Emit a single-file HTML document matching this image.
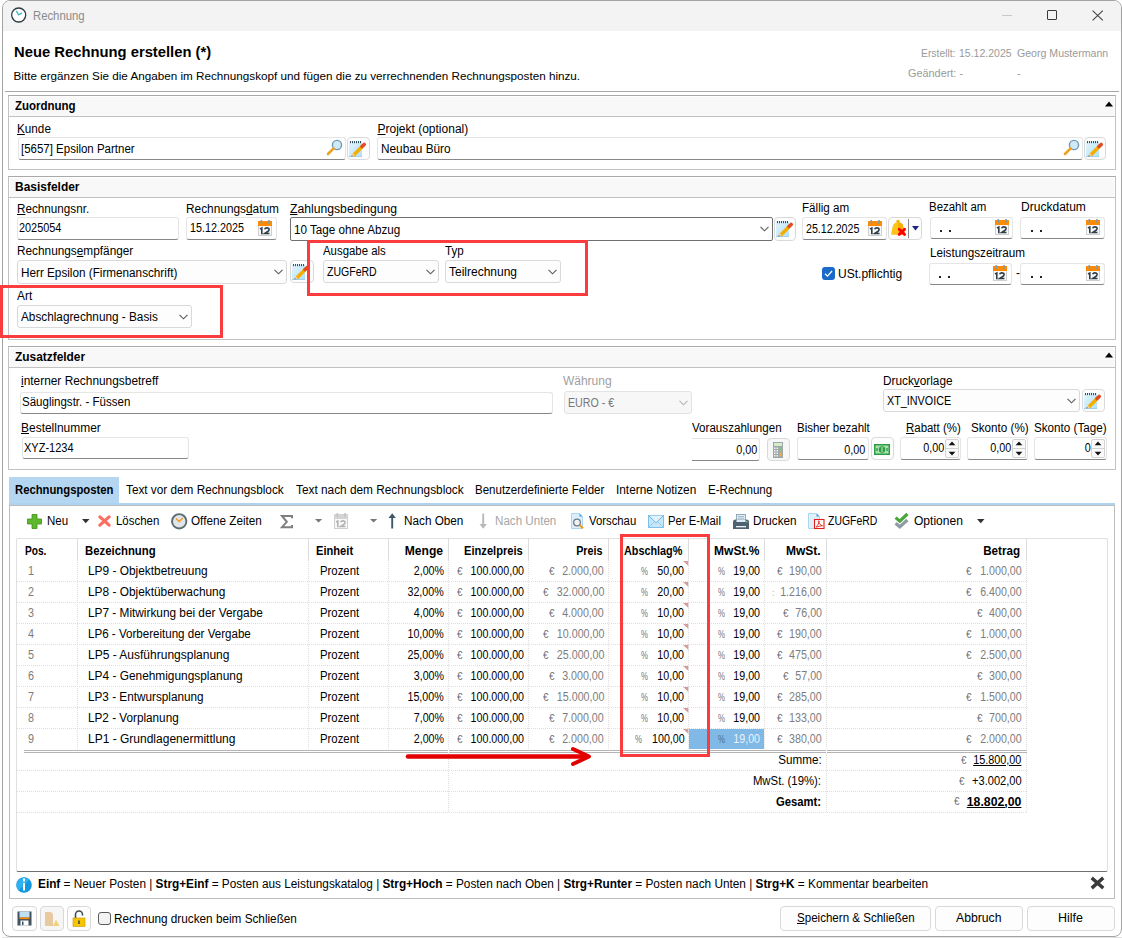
<!DOCTYPE html>
<html><head><meta charset="utf-8"><title>Rechnung</title>
<style>
html,body{margin:0;padding:0;}
body{width:1122px;height:938px;overflow:hidden;position:relative;background:#fff;font-family:"Liberation Sans",sans-serif;}
.t{position:absolute;line-height:1;white-space:pre;}
.b{position:absolute;box-sizing:border-box;}
svg{position:absolute;overflow:visible;}
u{text-decoration:underline;text-underline-offset:0.5px;text-decoration-thickness:1px;}
</style></head><body>
<div class="b" style="left:2px;top:0px;width:1120px;height:937px;border:1px solid #a3a3a3;border-radius:8px;background:#fff;"></div>
<div class="b" style="left:3px;top:1px;width:1118px;height:30px;background:#f3f3f3;border-radius:7px 7px 0 0;"></div>
<div class="b" style="left:2px;top:937px;width:1120px;height:1px;background:#e2e2e2;"></div>
<svg style="left:11px;top:7px" width="16" height="16" viewBox="0 0 16 16">
<circle cx="7.7" cy="8" r="7" fill="#fff" stroke="#2a3b42" stroke-width="1.3"/>
<path d="M5.3 3.8 L7.6 7.8 L11 6" fill="none" stroke="#4cb9c3" stroke-width="1.5"/>
</svg>
<div class="t" id="t0" style="left:32.5px;top:9.84px;font-size:12px;font-weight:400;color:#8b8b8b;transform:scaleX(0.9430);transform-origin:left 0;">Rechnung</div>
<div class="b" style="left:1002px;top:15px;width:10px;height:1px;background:#c9c9c9;"></div>
<div class="b" style="left:1047px;top:10px;width:10px;height:10px;border:1px solid #3a3a3a;border-radius:1px;"></div>
<svg style="left:1092px;top:10px" width="12" height="11"><path d="M0.6 0.6 L10.8 10.4 M10.8 0.6 L0.6 10.4" stroke="#444" stroke-width="1.1"/></svg>
<div class="t" id="t1" style="left:13.5px;top:44.10px;font-size:15px;font-weight:700;color:#000;transform:scaleX(0.9858);transform-origin:left 0;">Neue Rechnung erstellen (*)</div>
<div class="t" id="t2" style="left:13.5px;top:70.10px;font-size:11.7px;font-weight:400;color:#000;">Bitte ergänzen Sie die Angaben im Rechnungskopf und fügen die zu verrechnenden Rechnungsposten hinzu.</div>
<div class="t" id="t3" style="left:921.0px;top:47.89px;font-size:11px;font-weight:400;color:#9a9a9a;transform:scaleX(0.9404);transform-origin:left 0;">Erstellt:</div>
<div class="t" id="t4" style="left:959.4px;top:47.89px;font-size:11px;font-weight:400;color:#9a9a9a;transform:scaleX(0.9553);transform-origin:left 0;">15.12.2025</div>
<div class="t" id="t5" style="left:1017.0px;top:47.89px;font-size:11px;font-weight:400;color:#9a9a9a;transform:scaleX(0.9624);transform-origin:left 0;">Georg Mustermann</div>
<div class="t" id="t6" style="left:908.0px;top:67.69px;font-size:11px;font-weight:400;color:#9a9a9a;transform:scaleX(0.9885);transform-origin:left 0;">Geändert: -</div>
<div class="t" id="t7" style="left:1017.4px;top:67.69px;font-size:11px;font-weight:400;color:#9a9a9a;transform:scaleX(0.9850);transform-origin:left 0;">-</div>
<div class="b" style="left:5px;top:91px;width:1114px;height:1px;background:#a8a8a8;"></div>
<div class="b" style="left:8px;top:95px;width:1108px;height:75px;border:1px solid #c2c2c2;border-top-color:#a9a9a9;background:#fff;"></div>
<div class="b" style="left:10px;top:97px;width:1104px;height:19px;background:#f8f8f8;"></div>
<div class="b" style="left:9px;top:116px;width:1106px;height:1px;background:#c2c2c2;"></div>
<div class="t" id="t8" style="left:15.2px;top:100.14px;font-size:12px;font-weight:700;color:#000;transform:scaleX(0.9572);transform-origin:left 0;">Zuordnung</div>
<svg style="left:1105px;top:101px" width="8" height="6"><path d="M0 5.5 L4 0.5 L8 5.5 Z" fill="#000"/></svg>
<div class="t" id="t9" style="left:17.3px;top:122.84px;font-size:12px;font-weight:400;color:#000;transform:scaleX(0.9764);transform-origin:left 0;"><u>K</u>unde</div>
<div class="b" style="left:18px;top:137px;width:328px;height:23px;border:1px solid #e5e5e5;border-bottom:1px solid #878787;border-radius:3px;background:#fff;"></div>
<div class="t" id="t10" style="left:21.4px;top:142.84px;font-size:12px;font-weight:400;color:#000;transform:scaleX(0.9566);transform-origin:left 0;">[5657] Epsilon Partner</div>
<svg style="left:325.5px;top:138.5px" width="17" height="17" viewBox="0 0 17 17">
<circle cx="11" cy="6" r="4.6" fill="#cfe9f7" stroke="#6e9bb5" stroke-width="1.4"/>
<path d="M7.6 9.4 L2 15" stroke="#f0a020" stroke-width="2.6" stroke-linecap="round"/>
</svg>
<div class="b" style="left:347px;top:137px;width:23px;height:23px;border:1px solid #d9d9d9;border-radius:4px;background:#fdfdfd;"></div>
<svg style="left:347px;top:137px" width="22" height="23" viewBox="0 0 22 23">
<defs><linearGradient id="npg" x1="0" y1="0" x2="1" y2="1"><stop offset="0" stop-color="#e6f5fd"/><stop offset="1" stop-color="#aee0f8"/></linearGradient></defs>
<rect x="2" y="4.5" width="13" height="15.5" fill="url(#npg)"/>
<path d="M2 19.5 H15" stroke="#9fd0ee" stroke-width="1"/>
<path d="M3.5 4v2.2M5.5 4v2.2M7.5 4v2.2M9.5 4v2.2M11.5 4v2.2M13.5 4v2.2" stroke="#34505f" stroke-width="1"/>
<path d="M6.2 18.4 L15.2 9.4" stroke="#f5ae00" stroke-width="3.6"/>
<path d="M15 9.6 L17.2 7.4" stroke="#e34a1c" stroke-width="3.6" stroke-linecap="round"/>
<path d="M4.3 19.6 L5.6 16 L7.8 18.2 Z" fill="#f8d9a8"/>
<path d="M4.3 19.6 L4.9 18 L5.9 19 Z" fill="#444"/>
</svg>
<div class="t" id="t11" style="left:377.5px;top:122.84px;font-size:12px;font-weight:400;color:#000;"><u>P</u>rojekt (optional)</div>
<div class="b" style="left:377px;top:137px;width:706px;height:23px;border:1px solid #e5e5e5;border-bottom:1px solid #878787;border-radius:3px;background:#fff;"></div>
<div class="t" id="t12" style="left:381.0px;top:142.84px;font-size:12px;font-weight:400;color:#000;transform:scaleX(0.9842);transform-origin:left 0;">Neubau Büro</div>
<svg style="left:1062.5px;top:138.5px" width="17" height="17" viewBox="0 0 17 17">
<circle cx="11" cy="6" r="4.6" fill="#cfe9f7" stroke="#6e9bb5" stroke-width="1.4"/>
<path d="M7.6 9.4 L2 15" stroke="#f0a020" stroke-width="2.6" stroke-linecap="round"/>
</svg>
<div class="b" style="left:1084px;top:137px;width:22px;height:23px;border:1px solid #d9d9d9;border-radius:4px;background:#fdfdfd;"></div>
<svg style="left:1084px;top:137px" width="22" height="23" viewBox="0 0 22 23">
<defs><linearGradient id="npg" x1="0" y1="0" x2="1" y2="1"><stop offset="0" stop-color="#e6f5fd"/><stop offset="1" stop-color="#aee0f8"/></linearGradient></defs>
<rect x="2" y="4.5" width="13" height="15.5" fill="url(#npg)"/>
<path d="M2 19.5 H15" stroke="#9fd0ee" stroke-width="1"/>
<path d="M3.5 4v2.2M5.5 4v2.2M7.5 4v2.2M9.5 4v2.2M11.5 4v2.2M13.5 4v2.2" stroke="#34505f" stroke-width="1"/>
<path d="M6.2 18.4 L15.2 9.4" stroke="#f5ae00" stroke-width="3.6"/>
<path d="M15 9.6 L17.2 7.4" stroke="#e34a1c" stroke-width="3.6" stroke-linecap="round"/>
<path d="M4.3 19.6 L5.6 16 L7.8 18.2 Z" fill="#f8d9a8"/>
<path d="M4.3 19.6 L4.9 18 L5.9 19 Z" fill="#444"/>
</svg>
<div class="b" style="left:8px;top:176px;width:1108px;height:164px;border:1px solid #c2c2c2;border-top-color:#a9a9a9;background:#fff;"></div>
<div class="b" style="left:10px;top:178px;width:1104px;height:19px;background:#f8f8f8;"></div>
<div class="b" style="left:9px;top:197px;width:1106px;height:1px;background:#c2c2c2;"></div>
<div class="t" id="t13" style="left:15.2px;top:181.14px;font-size:12px;font-weight:700;color:#000;transform:scaleX(0.9969);transform-origin:left 0;">Basisfelder</div>
<div class="t" id="t14" style="left:17.4px;top:203.14px;font-size:12px;font-weight:400;color:#000;transform:scaleX(0.9749);transform-origin:left 0;"><u>R</u>echnungsnr.</div>
<div class="b" style="left:17px;top:217px;width:162px;height:23px;border:1px solid #e5e5e5;border-bottom:1px solid #878787;border-radius:3px;background:#fff;"></div>
<div class="t" id="t15" style="left:18.7px;top:221.84px;font-size:12px;font-weight:400;color:#000;transform:scaleX(0.9054);transform-origin:left 0;">2025054</div>
<div class="t" id="t16" style="left:186.4px;top:203.14px;font-size:12px;font-weight:400;color:#000;transform:scaleX(0.9884);transform-origin:left 0;">Rechnungs<u>d</u>atum</div>
<div class="b" style="left:186px;top:217px;width:91px;height:23px;border:1px solid #e5e5e5;border-bottom:1px solid #878787;border-radius:3px;background:#fff;"></div>
<div class="t" id="t17" style="left:190.0px;top:221.84px;font-size:12px;font-weight:400;color:#000;transform:scaleX(0.8974);transform-origin:left 0;">15.12.2025</div>
<svg style="left:258px;top:220px" width="14" height="16" viewBox="0 0 14 16">
<rect x="0.5" y="5.5" width="13" height="10" fill="#f8f8f8" stroke="#cfcfcf" stroke-width="1"/>
<rect x="0" y="1" width="14" height="5" fill="#ff8a00"/>
<rect x="2.5" y="0" width="1.6" height="4" fill="#7f9db0"/>
<rect x="10.2" y="0" width="1.6" height="4" fill="#7f9db0"/>
<path d="M2 9 L3.8 8 V14.2" fill="none" stroke="#2f3f49" stroke-width="1.6"/>
<path d="M6.6 9.3 Q7.2 7.9 8.9 7.9 Q11.2 7.9 11.1 9.6 Q11 10.9 8.6 12.3 L6.8 13.5 H11.5" fill="none" stroke="#2f3f49" stroke-width="1.6"/>
</svg>
<div class="t" id="t18" style="left:290.0px;top:203.14px;font-size:12px;font-weight:400;color:#000;transform:scaleX(1.0148);transform-origin:left 0;"><u>Z</u>ahlungsbedingung</div>
<div class="b" style="left:290px;top:217px;width:483px;height:24px;border:1px solid #707070;border-radius:2px;background:#fff;"></div>
<div class="t" id="t19" style="left:294.3px;top:223.64px;font-size:12px;font-weight:400;color:#000;transform:scaleX(0.9733);transform-origin:left 0;">10 Tage ohne Abzug</div>
<svg style="left:759.5px;top:226px" width="9" height="6"><path d="M0.5 0.8 L4.5 4.8 L8.5 0.8" fill="none" stroke="#5a5a5a" stroke-width="1.1"/></svg>
<div class="b" style="left:774px;top:217px;width:22px;height:24px;border:1px solid #d9d9d9;border-radius:4px;background:#fdfdfd;"></div>
<svg style="left:774px;top:217px" width="22" height="23" viewBox="0 0 22 23">
<defs><linearGradient id="npg" x1="0" y1="0" x2="1" y2="1"><stop offset="0" stop-color="#e6f5fd"/><stop offset="1" stop-color="#aee0f8"/></linearGradient></defs>
<rect x="2" y="4.5" width="13" height="15.5" fill="url(#npg)"/>
<path d="M2 19.5 H15" stroke="#9fd0ee" stroke-width="1"/>
<path d="M3.5 4v2.2M5.5 4v2.2M7.5 4v2.2M9.5 4v2.2M11.5 4v2.2M13.5 4v2.2" stroke="#34505f" stroke-width="1"/>
<path d="M6.2 18.4 L15.2 9.4" stroke="#f5ae00" stroke-width="3.6"/>
<path d="M15 9.6 L17.2 7.4" stroke="#e34a1c" stroke-width="3.6" stroke-linecap="round"/>
<path d="M4.3 19.6 L5.6 16 L7.8 18.2 Z" fill="#f8d9a8"/>
<path d="M4.3 19.6 L4.9 18 L5.9 19 Z" fill="#444"/>
</svg>
<div class="t" id="t20" style="left:802.4px;top:201.84px;font-size:12px;font-weight:400;color:#000;transform:scaleX(0.9694);transform-origin:left 0;">Fällig am</div>
<div class="b" style="left:802px;top:217px;width:85px;height:23px;border:1px solid #e5e5e5;border-bottom:1px solid #878787;border-radius:3px;background:#fff;"></div>
<div class="t" id="t21" style="left:806.0px;top:222.64px;font-size:12px;font-weight:400;color:#000;transform:scaleX(0.8891);transform-origin:left 0;">25.12.2025</div>
<svg style="left:868px;top:220px" width="14" height="16" viewBox="0 0 14 16">
<rect x="0.5" y="5.5" width="13" height="10" fill="#f8f8f8" stroke="#cfcfcf" stroke-width="1"/>
<rect x="0" y="1" width="14" height="5" fill="#ff8a00"/>
<rect x="2.5" y="0" width="1.6" height="4" fill="#7f9db0"/>
<rect x="10.2" y="0" width="1.6" height="4" fill="#7f9db0"/>
<path d="M2 9 L3.8 8 V14.2" fill="none" stroke="#2f3f49" stroke-width="1.6"/>
<path d="M6.6 9.3 Q7.2 7.9 8.9 7.9 Q11.2 7.9 11.1 9.6 Q11 10.9 8.6 12.3 L6.8 13.5 H11.5" fill="none" stroke="#2f3f49" stroke-width="1.6"/>
</svg>
<div class="b" style="left:888px;top:217px;width:34px;height:23px;border:1px solid #d9d9d9;border-radius:4px;background:#fdfdfd;"></div>
<div class="b" style="left:908px;top:219px;width:1px;height:19px;background:#888;"></div>
<svg style="left:889px;top:219px" width="18" height="18" viewBox="0 0 18 18">
<circle cx="9" cy="2.4" r="1.7" fill="#f2b400"/>
<path d="M2 15.8 L2.6 12.5 C3.4 9 3.6 5.5 5.6 4.2 C7 3.2 11 3.2 12.4 4.2 C14.4 5.5 14.6 9 15.4 12.5 L16 15.8 Z" fill="#fcc419"/>
<path d="M9 3.2 C11 3.2 12.4 4.2 12.4 4.2 C14.4 5.5 14.6 9 15.4 12.5 L16 15.8 H9 Z" fill="#f5b000"/>
<path d="M10.2 10.2 L15.6 15.6 M15.6 10.2 L10.2 15.6" stroke="#ff0000" stroke-width="2.8" stroke-linecap="round"/>
</svg>
<svg style="left:912px;top:225.5px" width="7" height="5"><path d="M0 0 L7 0 L3.5 4.5 Z" fill="#1a237e"/></svg>
<div class="t" id="t22" style="left:929.4px;top:201.44px;font-size:12px;font-weight:400;color:#000;transform:scaleX(0.9545);transform-origin:left 0;">Bezahlt am</div>
<div class="b" style="left:930px;top:217px;width:83px;height:22px;border:1px solid #e5e5e5;border-bottom:1px solid #878787;border-radius:3px;background:#fff;"></div>
<div class="b" style="left:940px;top:230px;width:2px;height:2px;background:#222;"></div>
<div class="b" style="left:949px;top:230px;width:2px;height:2px;background:#222;"></div>
<svg style="left:995px;top:219px" width="14" height="16" viewBox="0 0 14 16">
<rect x="0.5" y="5.5" width="13" height="10" fill="#f8f8f8" stroke="#cfcfcf" stroke-width="1"/>
<rect x="0" y="1" width="14" height="5" fill="#ff8a00"/>
<rect x="2.5" y="0" width="1.6" height="4" fill="#7f9db0"/>
<rect x="10.2" y="0" width="1.6" height="4" fill="#7f9db0"/>
<path d="M2 9 L3.8 8 V14.2" fill="none" stroke="#2f3f49" stroke-width="1.6"/>
<path d="M6.6 9.3 Q7.2 7.9 8.9 7.9 Q11.2 7.9 11.1 9.6 Q11 10.9 8.6 12.3 L6.8 13.5 H11.5" fill="none" stroke="#2f3f49" stroke-width="1.6"/>
</svg>
<div class="t" id="t23" style="left:1020.5px;top:201.44px;font-size:12px;font-weight:400;color:#000;transform:scaleX(1.0033);transform-origin:left 0;">Druckdatum</div>
<div class="b" style="left:1020px;top:217px;width:85px;height:22px;border:1px solid #e5e5e5;border-bottom:1px solid #878787;border-radius:3px;background:#fff;"></div>
<div class="b" style="left:1031px;top:230px;width:2px;height:2px;background:#222;"></div>
<div class="b" style="left:1040px;top:230px;width:2px;height:2px;background:#222;"></div>
<svg style="left:1086px;top:219px" width="14" height="16" viewBox="0 0 14 16">
<rect x="0.5" y="5.5" width="13" height="10" fill="#f8f8f8" stroke="#cfcfcf" stroke-width="1"/>
<rect x="0" y="1" width="14" height="5" fill="#ff8a00"/>
<rect x="2.5" y="0" width="1.6" height="4" fill="#7f9db0"/>
<rect x="10.2" y="0" width="1.6" height="4" fill="#7f9db0"/>
<path d="M2 9 L3.8 8 V14.2" fill="none" stroke="#2f3f49" stroke-width="1.6"/>
<path d="M6.6 9.3 Q7.2 7.9 8.9 7.9 Q11.2 7.9 11.1 9.6 Q11 10.9 8.6 12.3 L6.8 13.5 H11.5" fill="none" stroke="#2f3f49" stroke-width="1.6"/>
</svg>
<div class="t" id="t24" style="left:17.4px;top:244.84px;font-size:12px;font-weight:400;color:#000;transform:scaleX(0.9847);transform-origin:left 0;">Rechnungs<u>e</u>mpfänger</div>
<div class="b" style="left:17px;top:260px;width:270px;height:24px;border:1px solid #d9d9d9;border-radius:3px;background:#fdfdfd;"></div>
<svg style="left:274.0px;top:269.0px" width="9" height="6"><path d="M0.5 0.8 L4.5 4.8 L8.5 0.8" fill="none" stroke="#5a5a5a" stroke-width="1.1"/></svg>
<div class="t" id="t25" style="left:21.0px;top:266.84px;font-size:12px;font-weight:400;color:#000;transform:scaleX(0.9766);transform-origin:left 0;">Herr Epsilon (Firmenanschrift)</div>
<div class="b" style="left:290px;top:260px;width:24px;height:23px;border:1px solid #d9d9d9;border-radius:4px;background:#fdfdfd;"></div>
<svg style="left:290px;top:260px" width="22" height="23" viewBox="0 0 22 23">
<defs><linearGradient id="npg" x1="0" y1="0" x2="1" y2="1"><stop offset="0" stop-color="#e6f5fd"/><stop offset="1" stop-color="#aee0f8"/></linearGradient></defs>
<rect x="2" y="4.5" width="13" height="15.5" fill="url(#npg)"/>
<path d="M2 19.5 H15" stroke="#9fd0ee" stroke-width="1"/>
<path d="M3.5 4v2.2M5.5 4v2.2M7.5 4v2.2M9.5 4v2.2M11.5 4v2.2M13.5 4v2.2" stroke="#34505f" stroke-width="1"/>
<path d="M6.2 18.4 L15.2 9.4" stroke="#f5ae00" stroke-width="3.6"/>
<path d="M15 9.6 L17.2 7.4" stroke="#e34a1c" stroke-width="3.6" stroke-linecap="round"/>
<path d="M4.3 19.6 L5.6 16 L7.8 18.2 Z" fill="#f8d9a8"/>
<path d="M4.3 19.6 L4.9 18 L5.9 19 Z" fill="#444"/>
</svg>
<div class="b" style="left:307px;top:240px;width:281px;height:56px;border:3px solid #fb3c3f;"></div>
<div class="t" id="t26" style="left:323.4px;top:244.84px;font-size:12px;font-weight:400;color:#000;transform:scaleX(0.9493);transform-origin:left 0;">Ausgabe als</div>
<div class="b" style="left:323px;top:260px;width:116px;height:23px;border:1px solid #d9d9d9;border-radius:3px;background:#fdfdfd;"></div>
<svg style="left:426.0px;top:268.5px" width="9" height="6"><path d="M0.5 0.8 L4.5 4.8 L8.5 0.8" fill="none" stroke="#5a5a5a" stroke-width="1.1"/></svg>
<div class="t" id="t27" style="left:327.1px;top:266.14px;font-size:12px;font-weight:400;color:#000;transform:scaleX(0.8770);transform-origin:left 0;">ZUGFeRD</div>
<div class="t" id="t28" style="left:445.4px;top:244.84px;font-size:12px;font-weight:400;color:#000;transform:scaleX(0.9616);transform-origin:left 0;">Typ</div>
<div class="b" style="left:445px;top:260px;width:116px;height:23px;border:1px solid #d9d9d9;border-radius:3px;background:#fdfdfd;"></div>
<svg style="left:548.0px;top:268.5px" width="9" height="6"><path d="M0.5 0.8 L4.5 4.8 L8.5 0.8" fill="none" stroke="#5a5a5a" stroke-width="1.1"/></svg>
<div class="t" id="t29" style="left:449.0px;top:266.14px;font-size:12px;font-weight:400;color:#000;">Teilrechnung</div>
<div class="b" style="left:822px;top:267px;width:13px;height:13px;background:#1b6ac9;border-radius:3px;"></div>
<svg style="left:824px;top:269px" width="9" height="9"><path d="M1 4.8 L3.5 7.2 L8 2" fill="none" stroke="#fff" stroke-width="1.2"/></svg>
<div class="t" id="t30" style="left:838.4px;top:267.74px;font-size:12px;font-weight:400;color:#000;transform:scaleX(1.0026);transform-origin:left 0;">USt.pflichtig</div>
<div class="t" id="t31" style="left:929.5px;top:247.04px;font-size:12px;font-weight:400;color:#000;transform:scaleX(0.9755);transform-origin:left 0;">Leistungszeitraum</div>
<div class="b" style="left:929px;top:263px;width:83px;height:22px;border:1px solid #e5e5e5;border-bottom:1px solid #878787;border-radius:3px;background:#fff;"></div>
<div class="b" style="left:939px;top:276px;width:2px;height:2px;background:#222;"></div>
<div class="b" style="left:948px;top:276px;width:2px;height:2px;background:#222;"></div>
<svg style="left:993px;top:265px" width="14" height="16" viewBox="0 0 14 16">
<rect x="0.5" y="5.5" width="13" height="10" fill="#f8f8f8" stroke="#cfcfcf" stroke-width="1"/>
<rect x="0" y="1" width="14" height="5" fill="#ff8a00"/>
<rect x="2.5" y="0" width="1.6" height="4" fill="#7f9db0"/>
<rect x="10.2" y="0" width="1.6" height="4" fill="#7f9db0"/>
<path d="M2 9 L3.8 8 V14.2" fill="none" stroke="#2f3f49" stroke-width="1.6"/>
<path d="M6.6 9.3 Q7.2 7.9 8.9 7.9 Q11.2 7.9 11.1 9.6 Q11 10.9 8.6 12.3 L6.8 13.5 H11.5" fill="none" stroke="#2f3f49" stroke-width="1.6"/>
</svg>
<div class="t" id="t32" style="left:1015.5px;top:266.84px;font-size:12px;font-weight:400;color:#000;transform:scaleX(0.9850);transform-origin:left 0;">-</div>
<div class="b" style="left:1020px;top:263px;width:85px;height:22px;border:1px solid #e5e5e5;border-bottom:1px solid #878787;border-radius:3px;background:#fff;"></div>
<div class="b" style="left:1031px;top:276px;width:2px;height:2px;background:#222;"></div>
<div class="b" style="left:1040px;top:276px;width:2px;height:2px;background:#222;"></div>
<svg style="left:1086px;top:265px" width="14" height="16" viewBox="0 0 14 16">
<rect x="0.5" y="5.5" width="13" height="10" fill="#f8f8f8" stroke="#cfcfcf" stroke-width="1"/>
<rect x="0" y="1" width="14" height="5" fill="#ff8a00"/>
<rect x="2.5" y="0" width="1.6" height="4" fill="#7f9db0"/>
<rect x="10.2" y="0" width="1.6" height="4" fill="#7f9db0"/>
<path d="M2 9 L3.8 8 V14.2" fill="none" stroke="#2f3f49" stroke-width="1.6"/>
<path d="M6.6 9.3 Q7.2 7.9 8.9 7.9 Q11.2 7.9 11.1 9.6 Q11 10.9 8.6 12.3 L6.8 13.5 H11.5" fill="none" stroke="#2f3f49" stroke-width="1.6"/>
</svg>
<div class="b" style="left:0px;top:285px;width:223px;height:53px;border:3px solid #fb3c3f;"></div>
<div class="t" id="t33" style="left:17.4px;top:289.84px;font-size:12px;font-weight:400;color:#000;transform:scaleX(0.9906);transform-origin:left 0;">Art</div>
<div class="b" style="left:17px;top:305px;width:175px;height:23px;border:1px solid #d9d9d9;border-radius:3px;background:#fdfdfd;"></div>
<svg style="left:179.0px;top:313.5px" width="9" height="6"><path d="M0.5 0.8 L4.5 4.8 L8.5 0.8" fill="none" stroke="#5a5a5a" stroke-width="1.1"/></svg>
<div class="t" id="t34" style="left:21.0px;top:310.84px;font-size:12px;font-weight:400;color:#000;transform:scaleX(0.9812);transform-origin:left 0;">Abschlagrechnung - Basis</div>
<div class="b" style="left:8px;top:346px;width:1108px;height:124px;border:1px solid #c2c2c2;border-top-color:#a9a9a9;background:#fff;"></div>
<div class="b" style="left:10px;top:348px;width:1104px;height:19px;background:#f8f8f8;"></div>
<div class="b" style="left:9px;top:367px;width:1106px;height:1px;background:#c2c2c2;"></div>
<div class="t" id="t35" style="left:15.2px;top:351.14px;font-size:12px;font-weight:700;color:#000;transform:scaleX(0.9917);transform-origin:left 0;">Zusatzfelder</div>
<svg style="left:1105px;top:352px" width="8" height="6"><path d="M0 5.5 L4 0.5 L8 5.5 Z" fill="#000"/></svg>
<div class="t" id="t36" style="left:21.2px;top:374.84px;font-size:12px;font-weight:400;color:#000;transform:scaleX(0.9910);transform-origin:left 0;"><u>i</u>nterner Rechnungsbetreff</div>
<div class="b" style="left:20px;top:392px;width:533px;height:22px;border:1px solid #e5e5e5;border-bottom:1px solid #878787;border-radius:3px;background:#fff;"></div>
<div class="t" id="t37" style="left:22.0px;top:395.84px;font-size:12px;font-weight:400;color:#000;transform:scaleX(0.9607);transform-origin:left 0;">Säuglingstr. - Füssen</div>
<div class="t" id="t38" style="left:563.2px;top:375.24px;font-size:12px;font-weight:400;color:#a0a0a0;transform:scaleX(0.9979);transform-origin:left 0;">Währung</div>
<div class="b" style="left:564px;top:391px;width:128px;height:23px;border:1px solid #d9d9d9;border-radius:3px;background:#fdfdfd;background:#f7f7f7;border-color:#e3e3e3;"></div>
<svg style="left:679.0px;top:399.5px" width="9" height="6"><path d="M0.5 0.8 L4.5 4.8 L8.5 0.8" fill="none" stroke="#b5b5b5" stroke-width="1.1"/></svg>
<div class="t" id="t39" style="left:568.3px;top:396.84px;font-size:12px;font-weight:400;color:#777;transform:scaleX(0.8901);transform-origin:left 0;">EURO - €</div>
<div class="t" id="t40" style="left:882.6px;top:374.84px;font-size:12px;font-weight:400;color:#000;transform:scaleX(0.9830);transform-origin:left 0;">Druck<u>v</u>orlage</div>
<div class="b" style="left:883px;top:389px;width:197px;height:23px;border:1px solid #d9d9d9;border-radius:3px;background:#fdfdfd;"></div>
<svg style="left:1067.0px;top:397.5px" width="9" height="6"><path d="M0.5 0.8 L4.5 4.8 L8.5 0.8" fill="none" stroke="#5a5a5a" stroke-width="1.1"/></svg>
<div class="t" id="t41" style="left:887.0px;top:394.84px;font-size:12px;font-weight:400;color:#000;transform:scaleX(0.8997);transform-origin:left 0;">XT_INVOICE</div>
<div class="b" style="left:1082px;top:389px;width:23px;height:23px;border:1px solid #d9d9d9;border-radius:4px;background:#fdfdfd;"></div>
<svg style="left:1082px;top:389px" width="22" height="23" viewBox="0 0 22 23">
<defs><linearGradient id="npg" x1="0" y1="0" x2="1" y2="1"><stop offset="0" stop-color="#e6f5fd"/><stop offset="1" stop-color="#aee0f8"/></linearGradient></defs>
<rect x="2" y="4.5" width="13" height="15.5" fill="url(#npg)"/>
<path d="M2 19.5 H15" stroke="#9fd0ee" stroke-width="1"/>
<path d="M3.5 4v2.2M5.5 4v2.2M7.5 4v2.2M9.5 4v2.2M11.5 4v2.2M13.5 4v2.2" stroke="#34505f" stroke-width="1"/>
<path d="M6.2 18.4 L15.2 9.4" stroke="#f5ae00" stroke-width="3.6"/>
<path d="M15 9.6 L17.2 7.4" stroke="#e34a1c" stroke-width="3.6" stroke-linecap="round"/>
<path d="M4.3 19.6 L5.6 16 L7.8 18.2 Z" fill="#f8d9a8"/>
<path d="M4.3 19.6 L4.9 18 L5.9 19 Z" fill="#444"/>
</svg>
<div class="t" id="t42" style="left:21.2px;top:421.84px;font-size:12px;font-weight:400;color:#000;transform:scaleX(0.9969);transform-origin:left 0;"><u>B</u>estellnummer</div>
<div class="b" style="left:22px;top:437px;width:167px;height:22px;border:1px solid #e5e5e5;border-bottom:1px solid #878787;border-radius:3px;background:#fff;"></div>
<div class="t" id="t43" style="left:24.0px;top:441.84px;font-size:12px;font-weight:400;color:#000;transform:scaleX(0.9161);transform-origin:left 0;">XYZ-1234</div>
<div class="t" id="t44" style="left:691.8px;top:422.04px;font-size:12px;font-weight:400;color:#000;transform:scaleX(0.9671);transform-origin:left 0;">Vorauszahlungen</div>
<div class="b" style="left:692px;top:438px;width:68px;height:23px;border:1px solid #e5e5e5;border-bottom:1px solid #878787;border-radius:3px;background:#fff;border-left:none;border-top-left-radius:0;border-bottom-left-radius:0;"></div>
<div class="t" id="t45" style="right:365.0px;top:443.84px;font-size:12px;font-weight:400;color:#000;transform:scaleX(0.9000);transform-origin:right 0;">0,00</div>
<div class="b" style="left:767px;top:438px;width:23px;height:23px;border:1px solid #d9d9d9;border-radius:4px;background:#fdfdfd;background:#f7f7f7;"></div>
<svg style="left:773px;top:442px" width="10" height="16" viewBox="0 0 10 16">
<rect x="0" y="0" width="10" height="16" fill="#9ba6ab"/>
<rect x="1" y="1" width="8" height="3" fill="#d8ecc8"/>
<path d="M1 5.5h1.5v1.5H1zM3.5 5.5h1.5v1.5H3.5zM1 8h1.5v1.5H1zM3.5 8h1.5v1.5H3.5zM1 10.5h1.5v1.5H1zM3.5 10.5h1.5v1.5H3.5zM1 13h1.5v1.5H1zM3.5 13h1.5v1.5H3.5z" fill="#f4f6f6"/>
<path d="M6.5 5.5h2v1.5h-2zM6.5 8h2v1.5h-2z" fill="#8fcf70"/>
<path d="M6.5 10.5h2v4h-2z" fill="#f5b04a"/>
</svg>
<div class="b" style="left:871px;top:437px;width:23px;height:23px;border:1px solid #d9d9d9;border-radius:4px;background:#fdfdfd;"></div>
<svg style="left:874px;top:444px" width="16" height="11" viewBox="0 0 16 11">
<rect x="0" y="0" width="16" height="11" fill="#2e9e44"/>
<rect x="1.5" y="1.5" width="13" height="8" fill="#a8e0b0"/>
<circle cx="8" cy="5.5" r="3.2" fill="#2e9e44"/>
<path d="M8 3 V8" stroke="#c8f0cc" stroke-width="1"/>
<path d="M3 4v3M13 4v3" stroke="#2e9e44" stroke-width="1.4"/>
</svg>
<div class="t" id="t46" style="left:796.5px;top:422.34px;font-size:12px;font-weight:400;color:#000;transform:scaleX(0.9573);transform-origin:left 0;">Bisher bezahlt</div>
<div class="b" style="left:797px;top:437px;width:72px;height:23px;border:1px solid #e5e5e5;border-bottom:1px solid #878787;border-radius:3px;background:#fff;"></div>
<div class="t" id="t47" style="right:257.0px;top:443.84px;font-size:12px;font-weight:400;color:#000;transform:scaleX(0.9000);transform-origin:right 0;">0,00</div>
<div class="t" id="t48" style="left:906.3px;top:422.34px;font-size:12px;font-weight:400;color:#000;transform:scaleX(0.9536);transform-origin:left 0;"><u>R</u>abatt (%)</div>
<div class="b" style="left:900px;top:437px;width:61px;height:23px;border:1px solid #e5e5e5;border-bottom:1px solid #878787;border-radius:3px;background:#fff;"></div>
<div class="t" id="t49" style="right:178.0px;top:441.84px;font-size:12px;font-weight:400;color:#000;transform:scaleX(0.9000);transform-origin:right 0;">0,00</div>
<div class="b" style="left:945px;top:439px;width:14px;height:19px;border:1px solid #d2d2d2;border-radius:2px;background:#fafafa;"></div>
<div class="b" style="left:946px;top:448px;width:12px;height:1px;background:#d2d2d2;"></div>
<svg style="left:945px;top:439px" width="14" height="19" viewBox="0 0 14 19">
<path d="M3.6 6.2 L7 2.4 L10.4 6.2 Z" fill="#111"/>
<path d="M3.6 12.8 L7 16.6 L10.4 12.8 Z" fill="#111"/>
</svg>
<div class="t" id="t50" style="left:970.5px;top:422.34px;font-size:12px;font-weight:400;color:#000;transform:scaleX(0.9720);transform-origin:left 0;">Skonto (%)</div>
<div class="b" style="left:967px;top:437px;width:61px;height:23px;border:1px solid #e5e5e5;border-bottom:1px solid #878787;border-radius:3px;background:#fff;"></div>
<div class="t" id="t51" style="right:110.5px;top:441.84px;font-size:12px;font-weight:400;color:#000;transform:scaleX(0.9000);transform-origin:right 0;">0,00</div>
<div class="b" style="left:1012px;top:439px;width:14px;height:19px;border:1px solid #d2d2d2;border-radius:2px;background:#fafafa;"></div>
<div class="b" style="left:1013px;top:448px;width:12px;height:1px;background:#d2d2d2;"></div>
<svg style="left:1012px;top:439px" width="14" height="19" viewBox="0 0 14 19">
<path d="M3.6 6.2 L7 2.4 L10.4 6.2 Z" fill="#111"/>
<path d="M3.6 12.8 L7 16.6 L10.4 12.8 Z" fill="#111"/>
</svg>
<div class="t" id="t52" style="left:1034.0px;top:422.34px;font-size:12px;font-weight:400;color:#000;transform:scaleX(0.9716);transform-origin:left 0;">Skonto (Tage)</div>
<div class="b" style="left:1034px;top:437px;width:73px;height:23px;border:1px solid #e5e5e5;border-bottom:1px solid #878787;border-radius:3px;background:#fff;"></div>
<div class="t" id="t53" style="right:31.5px;top:441.84px;font-size:12px;font-weight:400;color:#000;transform:scaleX(0.9000);transform-origin:right 0;">0</div>
<div class="b" style="left:1091px;top:439px;width:14px;height:19px;border:1px solid #d2d2d2;border-radius:2px;background:#fafafa;"></div>
<div class="b" style="left:1092px;top:448px;width:12px;height:1px;background:#d2d2d2;"></div>
<svg style="left:1091px;top:439px" width="14" height="19" viewBox="0 0 14 19">
<path d="M3.6 6.2 L7 2.4 L10.4 6.2 Z" fill="#111"/>
<path d="M3.6 12.8 L7 16.6 L10.4 12.8 Z" fill="#111"/>
</svg>
<div class="b" style="left:9px;top:505px;width:1106px;height:394px;border:1px solid #bdbdbd;background:#fff;"></div>
<div class="b" style="left:9px;top:503px;width:1106px;height:2px;background:#acd3ef;"></div>
<div class="b" style="left:9px;top:477px;width:110px;height:26px;background:#b4d6f0;"></div>
<div class="t" id="t54" style="left:15.2px;top:483.74px;font-size:12px;font-weight:700;color:#000;transform:scaleX(0.9401);transform-origin:left 0;">Rechnungsposten</div>
<div class="t" id="t55" style="left:125.7px;top:483.84px;font-size:12px;font-weight:400;color:#000;transform:scaleX(0.9810);transform-origin:left 0;">Text vor dem Rechnungsblock</div>
<div class="t" id="t56" style="left:295.5px;top:483.84px;font-size:12px;font-weight:400;color:#000;transform:scaleX(0.9858);transform-origin:left 0;">Text nach dem Rechnungsblock</div>
<div class="t" id="t57" style="left:474.7px;top:483.84px;font-size:12px;font-weight:400;color:#000;transform:scaleX(0.9596);transform-origin:left 0;">Benutzerdefinierte Felder</div>
<div class="t" id="t58" style="left:616.1px;top:483.84px;font-size:12px;font-weight:400;color:#000;transform:scaleX(0.9866);transform-origin:left 0;">Interne Notizen</div>
<div class="t" id="t59" style="left:708.4px;top:483.84px;font-size:12px;font-weight:400;color:#000;transform:scaleX(0.9622);transform-origin:left 0;">E-Rechnung</div>
<svg style="left:26.5px;top:514px" width="15" height="15" viewBox="0 0 15 15">
<path d="M5 0.5h5v4.5h4.5v5H10v4.5H5V10H0.5V5H5z" fill="#5cb82d" stroke="#3f8f1c" stroke-width="0.8"/>
</svg>
<div class="t" id="t60" style="left:46.5px;top:514.64px;font-size:12px;font-weight:400;color:#000;transform:scaleX(0.9584);transform-origin:left 0;">Neu</div>
<svg style="left:81.8px;top:518.9px" width="7.5" height="4.3"><path d="M0 0 L7.5 0 L3.75 4.3 Z" fill="#333"/></svg>
<svg style="left:97.5px;top:515px" width="13" height="12"><path d="M1.9 1.9 L11.1 10.1 M11.1 1.9 L1.9 10.1" stroke="#fb6d5e" stroke-width="3.2" stroke-linecap="round"/></svg>
<div class="t" id="t61" style="left:116.3px;top:514.64px;font-size:12px;font-weight:400;color:#000;transform:scaleX(0.9543);transform-origin:left 0;">Löschen</div>
<svg style="left:170.5px;top:512.5px" width="17" height="17" viewBox="0 0 17 17">
<circle cx="8.2" cy="8.3" r="7.2" fill="#dfe5e8" stroke="#5d6c73" stroke-width="1.9"/>
<path d="M5 5.5 L8.2 8.6 L11.8 5" fill="none" stroke="#f39a1d" stroke-width="1.4"/>
</svg>
<div class="t" id="t62" style="left:191.2px;top:514.64px;font-size:12px;font-weight:400;color:#000;transform:scaleX(0.9766);transform-origin:left 0;">Offene Zeiten</div>
<svg style="left:279.5px;top:515.2px" width="13" height="14" viewBox="0 0 13 14"><path d="M12 3.2 V1 H2 L6.8 6.8 L2 12.2 H12 V10" fill="none" stroke="#7f7f7f" stroke-width="2" stroke-linejoin="miter"/></svg>
<svg style="left:315.1px;top:519.3px" width="7.2" height="3.6"><path d="M0 0 L7.2 0 L3.6 3.6 Z" fill="#777"/></svg>
<svg style="left:333.5px;top:513px" width="14" height="16" viewBox="0 0 14 16">
<rect x="0.5" y="5.5" width="13" height="10" fill="#f8f8f8" stroke="#cfcfcf" stroke-width="1"/>
<rect x="0" y="1" width="14" height="5" fill="#d4d4d4"/>
<rect x="2.5" y="0" width="1.6" height="4" fill="#c4c4c4"/>
<rect x="10.2" y="0" width="1.6" height="4" fill="#c4c4c4"/>
<path d="M2 9 L3.8 8 V14.2" fill="none" stroke="#b4b4b4" stroke-width="1.6"/>
<path d="M6.6 9.3 Q7.2 7.9 8.9 7.9 Q11.2 7.9 11.1 9.6 Q11 10.9 8.6 12.3 L6.8 13.5 H11.5" fill="none" stroke="#b4b4b4" stroke-width="1.6"/>
</svg>
<svg style="left:370px;top:519.3px" width="7.2" height="3.6"><path d="M0 0 L7.2 0 L3.6 3.6 Z" fill="#777"/></svg>
<svg style="left:388px;top:513px" width="9" height="16" viewBox="0 0 9 16"><path d="M4.2 3 V15.5" stroke="#3f5868" stroke-width="1.9"/><path d="M0.5 5 L4.2 0.2 L7.9 5 Z" fill="#3f5868"/></svg>
<div class="t" id="t63" style="left:404.3px;top:514.64px;font-size:12px;font-weight:400;color:#000;transform:scaleX(0.9785);transform-origin:left 0;">Nach Oben</div>
<svg style="left:479px;top:513px" width="9" height="16" viewBox="0 0 9 16"><path d="M4.2 0.5 V13" stroke="#b9b9b9" stroke-width="1.9"/><path d="M0.5 11 L4.2 15.8 L7.9 11 Z" fill="#b9b9b9"/></svg>
<div class="t" id="t64" style="left:495.2px;top:514.64px;font-size:12px;font-weight:400;color:#a6a6a6;transform:scaleX(0.9673);transform-origin:left 0;">Nach Unten</div>
<svg style="left:570.5px;top:513px" width="15" height="16" viewBox="0 0 15 16">
<path d="M0.5 0.5 H8.5 L11.5 3.5 V15.5 H0.5 Z" fill="#dbeefa" stroke="#a9d3ee"/>
<path d="M8.5 0.5 V3.5 H11.5 Z" fill="#4aa0dc"/>
<circle cx="6" cy="9.5" r="3.3" fill="#f4f4f4" stroke="#6b7c86" stroke-width="1.3"/>
<path d="M8.5 12 L12 15.3" stroke="#f39a1d" stroke-width="2"/>
</svg>
<div class="t" id="t65" style="left:589.4px;top:514.64px;font-size:12px;font-weight:400;color:#000;transform:scaleX(0.9431);transform-origin:left 0;">Vorschau</div>
<svg style="left:648px;top:515px" width="16" height="13" viewBox="0 0 16 13">
<rect x="0.5" y="0.5" width="15" height="12" fill="#c6e6fa" stroke="#7fc0ea"/>
<path d="M0.8 12.2 L6 7 M15.2 12.2 L10 7" fill="none" stroke="#8ccaf0" stroke-width="0.9"/>
<path d="M0.8 0.8 L8 7.8 L15.2 0.8" fill="#e2f3fd" stroke="#6fb6e6" stroke-width="1"/>
</svg>
<div class="t" id="t66" style="left:668.4px;top:514.64px;font-size:12px;font-weight:400;color:#000;transform:scaleX(0.9444);transform-origin:left 0;">Per E-Mail</div>
<svg style="left:733px;top:514px" width="16" height="15" viewBox="0 0 16 15">
<rect x="3.5" y="0.5" width="9" height="8" fill="#dcedf8" stroke="#7f98a6" stroke-width="0.8"/>
<path d="M5 2.5h6M5 4.2h6M5 5.9h4" stroke="#90a8b8" stroke-width="0.7"/>
<path d="M0 8 Q0 5.5 2.5 5.5 H13.5 Q16 5.5 16 8 V15 H0 Z" fill="#4e626f"/>
<rect x="3.5" y="5.5" width="9" height="2.5" fill="#dcedf8"/>
<rect x="3" y="12" width="10" height="1.3" fill="#eef3f6"/>
<rect x="13" y="7" width="1.6" height="1.3" fill="#6c6"/>
</svg>
<div class="t" id="t67" style="left:753.0px;top:514.64px;font-size:12px;font-weight:400;color:#000;transform:scaleX(0.9757);transform-origin:left 0;">Drucken</div>
<svg style="left:808px;top:513px" width="17" height="16" viewBox="0 0 17 16">
<path d="M0.5 0.5 H8.5 L11.5 3.5 V15.5 H0.5 Z" fill="#dff0fb" stroke="#b0d6ef"/>
<path d="M8.5 0.5 V3.5 H11.5 Z" fill="#4aa0dc"/>
<rect x="6.5" y="6.5" width="9.5" height="9" fill="#fff" stroke="#e0201c" stroke-width="1.1"/>
<path d="M8.3 14.2 C9.8 12 11.2 9.6 11.2 8.3 C11.2 7.4 10.2 7.5 10.4 8.5 C10.7 10.2 12.6 12.3 14.6 12.8 C13 12.8 10.2 13.4 8.3 14.2 Z" fill="none" stroke="#e0201c" stroke-width="0.9"/>
</svg>
<div class="t" id="t68" style="left:828.2px;top:514.64px;font-size:12px;font-weight:400;color:#000;transform:scaleX(0.8699);transform-origin:left 0;">ZUGFeRD</div>
<svg style="left:894px;top:512px" width="15" height="18" viewBox="0 0 15 18">
<path d="M1.6 11.2 L5.8 14.8 L13.4 8" fill="none" stroke="#8f9ca4" stroke-width="3.2"/>
<path d="M1.6 5.6 L5.8 9.2 L13.4 2" fill="none" stroke="#48a63a" stroke-width="3.2"/>
</svg>
<div class="t" id="t69" style="left:913.7px;top:514.64px;font-size:12px;font-weight:400;color:#000;transform:scaleX(1.0040);transform-origin:left 0;">Optionen</div>
<svg style="left:976.8px;top:518.7px" width="7.5" height="4.3"><path d="M0 0 L7.5 0 L3.75 4.3 Z" fill="#333"/></svg>
<div class="b" style="left:16px;top:538px;width:1092px;height:334px;border:1px solid #e0e0e0;border-bottom:1px solid #707070;border-radius:2px;"></div>
<div class="b" style="left:77px;top:539px;width:1px;height:21px;background:#dcdcdc;"></div>
<div class="b" style="left:308px;top:539px;width:1px;height:21px;background:#dcdcdc;"></div>
<div class="b" style="left:388px;top:539px;width:1px;height:21px;background:#dcdcdc;"></div>
<div class="b" style="left:448px;top:539px;width:1px;height:21px;background:#dcdcdc;"></div>
<div class="b" style="left:528px;top:539px;width:1px;height:21px;background:#dcdcdc;"></div>
<div class="b" style="left:608px;top:539px;width:1px;height:21px;background:#dcdcdc;"></div>
<div class="b" style="left:688px;top:539px;width:1px;height:21px;background:#dcdcdc;"></div>
<div class="b" style="left:764px;top:539px;width:1px;height:21px;background:#dcdcdc;"></div>
<div class="b" style="left:826px;top:539px;width:1px;height:21px;background:#dcdcdc;"></div>
<div class="b" style="left:1026px;top:539px;width:1px;height:21px;background:#dcdcdc;"></div>
<div class="t" id="t70" style="left:24.6px;top:545.24px;font-size:12px;font-weight:700;color:#000;transform:scaleX(0.8444);transform-origin:left 0;">Pos.</div>
<div class="t" id="t71" style="left:85.0px;top:545.24px;font-size:12px;font-weight:700;color:#000;transform:scaleX(0.9455);transform-origin:left 0;">Bezeichnung</div>
<div class="t" id="t72" style="left:315.6px;top:545.24px;font-size:12px;font-weight:700;color:#000;transform:scaleX(0.9271);transform-origin:left 0;">Einheit</div>
<div class="t" id="t73" style="right:679.4px;top:545.24px;font-size:12px;font-weight:700;color:#000;transform:scaleX(1.0075);transform-origin:right 0;">Menge</div>
<div class="t" id="t74" style="left:464.0px;top:545.24px;font-size:12px;font-weight:700;color:#000;transform:scaleX(0.9280);transform-origin:left 0;">Einzelpreis</div>
<div class="t" id="t75" style="right:519.2px;top:545.24px;font-size:12px;font-weight:700;color:#000;transform:scaleX(0.8924);transform-origin:right 0;">Preis</div>
<div class="t" id="t76" style="left:624.2px;top:545.24px;font-size:12px;font-weight:700;color:#000;transform:scaleX(0.9013);transform-origin:left 0;">Abschlag%</div>
<div class="t" id="t77" style="left:713.7px;top:545.24px;font-size:12px;font-weight:700;color:#000;transform:scaleX(1.0034);transform-origin:left 0;">MwSt.%</div>
<div class="t" id="t78" style="left:786.0px;top:545.24px;font-size:12px;font-weight:700;color:#000;">MwSt.</div>
<div class="t" id="t79" style="right:101.5px;top:545.24px;font-size:12px;font-weight:700;color:#000;transform:scaleX(0.9680);transform-origin:right 0;">Betrag</div>
<div class="t" id="t80" style="left:28.2px;top:565.04px;font-size:12px;font-weight:400;color:#7d7d7d;transform:scaleX(0.9000);transform-origin:left 0;">1</div>
<div class="t" id="t81" style="left:88.0px;top:565.04px;font-size:12px;font-weight:400;color:#000;transform:scaleX(0.9913);transform-origin:left 0;">LP9 - Objektbetreuung</div>
<div class="t" id="t82" style="left:319.7px;top:565.04px;font-size:12px;font-weight:400;color:#000;transform:scaleX(0.9454);transform-origin:left 0;">Prozent</div>
<div class="t" id="t83" style="right:678.3px;top:565.04px;font-size:12px;font-weight:400;color:#000;transform:scaleX(0.8900);transform-origin:right 0;">2,00%</div>
<div class="t" id="t84" style="left:457.2px;top:566.73px;font-size:10px;font-weight:400;color:#707070;transform:scaleX(0.9850);transform-origin:left 0;">€</div>
<div class="t" id="t85" style="right:598.0px;top:565.04px;font-size:12px;font-weight:400;color:#000;transform:scaleX(0.8907);transform-origin:right 0;">100.000,00</div>
<div class="t" id="t86" style="right:517.9px;top:565.04px;font-size:12px;font-weight:400;color:#7d7d7d;transform:scaleX(0.8900);transform-origin:right 0;">2.000,00</div>
<div class="t" id="t87" style="left:548.5px;top:566.73px;font-size:10px;font-weight:400;color:#707070;transform:scaleX(0.9850);transform-origin:left 0;">€</div>
<div class="t" id="t88" style="right:437.7px;top:565.04px;font-size:12px;font-weight:400;color:#000;transform:scaleX(0.8900);transform-origin:right 0;">50,00</div>
<div class="t" id="t89" style="left:640.5px;top:566.73px;font-size:10px;font-weight:400;color:#777;transform:scaleX(0.7800);transform-origin:left 0;">%</div>
<svg style="left:683px;top:560.5px" width="6" height="5"><path d="M0 0 H5.5 V5 Z" fill="#d49c9c"/></svg>
<div class="t" id="t90" style="right:362.4px;top:565.04px;font-size:12px;font-weight:400;color:#000;transform:scaleX(0.8900);transform-origin:right 0;">19,00</div>
<div class="t" id="t91" style="left:717.7px;top:566.73px;font-size:10px;font-weight:400;color:#777;transform:scaleX(0.7800);transform-origin:left 0;">%</div>
<div class="t" id="t92" style="right:300.2px;top:565.04px;font-size:12px;font-weight:400;color:#7d7d7d;transform:scaleX(0.8900);transform-origin:right 0;">190,00</div>
<div class="t" id="t93" style="left:777.1px;top:566.73px;font-size:10px;font-weight:400;color:#707070;transform:scaleX(0.9850);transform-origin:left 0;">€</div>
<div class="t" id="t94" style="right:100.1px;top:565.04px;font-size:12px;font-weight:400;color:#7d7d7d;transform:scaleX(0.8900);transform-origin:right 0;">1.000,00</div>
<div class="t" id="t95" style="left:966.3px;top:566.73px;font-size:10px;font-weight:400;color:#707070;transform:scaleX(0.9850);transform-origin:left 0;">€</div>
<div class="b" style="left:17px;top:581px;width:1009px;height:1px;background:repeating-linear-gradient(to right,#dedede 0 1px,transparent 1px 2px);"></div>
<div class="t" id="t96" style="left:28.2px;top:586.04px;font-size:12px;font-weight:400;color:#7d7d7d;transform:scaleX(0.9000);transform-origin:left 0;">2</div>
<div class="t" id="t97" style="left:88.0px;top:586.04px;font-size:12px;font-weight:400;color:#000;transform:scaleX(0.9895);transform-origin:left 0;">LP8 - Objektüberwachung</div>
<div class="t" id="t98" style="left:319.7px;top:586.04px;font-size:12px;font-weight:400;color:#000;transform:scaleX(0.9454);transform-origin:left 0;">Prozent</div>
<div class="t" id="t99" style="right:678.3px;top:586.04px;font-size:12px;font-weight:400;color:#000;transform:scaleX(0.8900);transform-origin:right 0;">32,00%</div>
<div class="t" id="t100" style="left:457.2px;top:587.73px;font-size:10px;font-weight:400;color:#707070;transform:scaleX(0.9850);transform-origin:left 0;">€</div>
<div class="t" id="t101" style="right:598.0px;top:586.04px;font-size:12px;font-weight:400;color:#000;transform:scaleX(0.8907);transform-origin:right 0;">100.000,00</div>
<div class="t" id="t102" style="right:517.9px;top:586.04px;font-size:12px;font-weight:400;color:#7d7d7d;transform:scaleX(0.8900);transform-origin:right 0;">32.000,00</div>
<div class="t" id="t103" style="left:543.1px;top:587.73px;font-size:10px;font-weight:400;color:#707070;transform:scaleX(0.9850);transform-origin:left 0;">€</div>
<div class="t" id="t104" style="right:437.7px;top:586.04px;font-size:12px;font-weight:400;color:#000;transform:scaleX(0.8900);transform-origin:right 0;">20,00</div>
<div class="t" id="t105" style="left:640.5px;top:587.73px;font-size:10px;font-weight:400;color:#777;transform:scaleX(0.7800);transform-origin:left 0;">%</div>
<svg style="left:683px;top:581.5px" width="6" height="5"><path d="M0 0 H5.5 V5 Z" fill="#d49c9c"/></svg>
<div class="t" id="t106" style="right:362.4px;top:586.04px;font-size:12px;font-weight:400;color:#000;transform:scaleX(0.8900);transform-origin:right 0;">19,00</div>
<div class="t" id="t107" style="left:717.7px;top:587.73px;font-size:10px;font-weight:400;color:#777;transform:scaleX(0.7800);transform-origin:left 0;">%</div>
<div class="t" id="t108" style="right:300.2px;top:586.04px;font-size:12px;font-weight:400;color:#7d7d7d;transform:scaleX(0.8900);transform-origin:right 0;">1.216,00</div>
<div class="t" id="t109" style="left:771.5px;top:588.58px;font-size:9px;font-weight:400;color:#aaa;transform:scaleX(0.9850);transform-origin:left 0;">:</div>
<div class="t" id="t110" style="right:100.1px;top:586.04px;font-size:12px;font-weight:400;color:#7d7d7d;transform:scaleX(0.8900);transform-origin:right 0;">6.400,00</div>
<div class="t" id="t111" style="left:966.3px;top:587.73px;font-size:10px;font-weight:400;color:#707070;transform:scaleX(0.9850);transform-origin:left 0;">€</div>
<div class="b" style="left:17px;top:602px;width:1009px;height:1px;background:repeating-linear-gradient(to right,#dedede 0 1px,transparent 1px 2px);"></div>
<div class="t" id="t112" style="left:28.2px;top:607.04px;font-size:12px;font-weight:400;color:#7d7d7d;transform:scaleX(0.9000);transform-origin:left 0;">3</div>
<div class="t" id="t113" style="left:88.0px;top:607.04px;font-size:12px;font-weight:400;color:#000;transform:scaleX(0.9851);transform-origin:left 0;">LP7 - Mitwirkung bei der Vergabe</div>
<div class="t" id="t114" style="left:319.7px;top:607.04px;font-size:12px;font-weight:400;color:#000;transform:scaleX(0.9454);transform-origin:left 0;">Prozent</div>
<div class="t" id="t115" style="right:678.3px;top:607.04px;font-size:12px;font-weight:400;color:#000;transform:scaleX(0.8900);transform-origin:right 0;">4,00%</div>
<div class="t" id="t116" style="left:457.2px;top:608.73px;font-size:10px;font-weight:400;color:#707070;transform:scaleX(0.9850);transform-origin:left 0;">€</div>
<div class="t" id="t117" style="right:598.0px;top:607.04px;font-size:12px;font-weight:400;color:#000;transform:scaleX(0.8907);transform-origin:right 0;">100.000,00</div>
<div class="t" id="t118" style="right:517.9px;top:607.04px;font-size:12px;font-weight:400;color:#7d7d7d;transform:scaleX(0.8900);transform-origin:right 0;">4.000,00</div>
<div class="t" id="t119" style="left:548.5px;top:608.73px;font-size:10px;font-weight:400;color:#707070;transform:scaleX(0.9850);transform-origin:left 0;">€</div>
<div class="t" id="t120" style="right:437.7px;top:607.04px;font-size:12px;font-weight:400;color:#000;transform:scaleX(0.8900);transform-origin:right 0;">10,00</div>
<div class="t" id="t121" style="left:640.5px;top:608.73px;font-size:10px;font-weight:400;color:#777;transform:scaleX(0.7800);transform-origin:left 0;">%</div>
<svg style="left:683px;top:602.5px" width="6" height="5"><path d="M0 0 H5.5 V5 Z" fill="#d49c9c"/></svg>
<div class="t" id="t122" style="right:362.4px;top:607.04px;font-size:12px;font-weight:400;color:#000;transform:scaleX(0.8900);transform-origin:right 0;">19,00</div>
<div class="t" id="t123" style="left:717.7px;top:608.73px;font-size:10px;font-weight:400;color:#777;transform:scaleX(0.7800);transform-origin:left 0;">%</div>
<div class="t" id="t124" style="right:300.2px;top:607.04px;font-size:12px;font-weight:400;color:#7d7d7d;transform:scaleX(0.8900);transform-origin:right 0;">76,00</div>
<div class="t" id="t125" style="left:782.5px;top:608.73px;font-size:10px;font-weight:400;color:#707070;transform:scaleX(0.9850);transform-origin:left 0;">€</div>
<div class="t" id="t126" style="right:100.1px;top:607.04px;font-size:12px;font-weight:400;color:#7d7d7d;transform:scaleX(0.8900);transform-origin:right 0;">400,00</div>
<div class="t" id="t127" style="left:977.2px;top:608.73px;font-size:10px;font-weight:400;color:#707070;transform:scaleX(0.9850);transform-origin:left 0;">€</div>
<div class="b" style="left:17px;top:623px;width:1009px;height:1px;background:repeating-linear-gradient(to right,#dedede 0 1px,transparent 1px 2px);"></div>
<div class="t" id="t128" style="left:28.2px;top:628.04px;font-size:12px;font-weight:400;color:#7d7d7d;transform:scaleX(0.9000);transform-origin:left 0;">4</div>
<div class="t" id="t129" style="left:88.0px;top:628.04px;font-size:12px;font-weight:400;color:#000;transform:scaleX(0.9645);transform-origin:left 0;">LP6 - Vorbereitung der Vergabe</div>
<div class="t" id="t130" style="left:319.7px;top:628.04px;font-size:12px;font-weight:400;color:#000;transform:scaleX(0.9454);transform-origin:left 0;">Prozent</div>
<div class="t" id="t131" style="right:678.3px;top:628.04px;font-size:12px;font-weight:400;color:#000;transform:scaleX(0.8900);transform-origin:right 0;">10,00%</div>
<div class="t" id="t132" style="left:457.2px;top:629.73px;font-size:10px;font-weight:400;color:#707070;transform:scaleX(0.9850);transform-origin:left 0;">€</div>
<div class="t" id="t133" style="right:598.0px;top:628.04px;font-size:12px;font-weight:400;color:#000;transform:scaleX(0.8907);transform-origin:right 0;">100.000,00</div>
<div class="t" id="t134" style="right:517.9px;top:628.04px;font-size:12px;font-weight:400;color:#7d7d7d;transform:scaleX(0.8900);transform-origin:right 0;">10.000,00</div>
<div class="t" id="t135" style="left:543.1px;top:629.73px;font-size:10px;font-weight:400;color:#707070;transform:scaleX(0.9850);transform-origin:left 0;">€</div>
<div class="t" id="t136" style="right:437.7px;top:628.04px;font-size:12px;font-weight:400;color:#000;transform:scaleX(0.8900);transform-origin:right 0;">10,00</div>
<div class="t" id="t137" style="left:640.5px;top:629.73px;font-size:10px;font-weight:400;color:#777;transform:scaleX(0.7800);transform-origin:left 0;">%</div>
<svg style="left:683px;top:623.5px" width="6" height="5"><path d="M0 0 H5.5 V5 Z" fill="#d49c9c"/></svg>
<div class="t" id="t138" style="right:362.4px;top:628.04px;font-size:12px;font-weight:400;color:#000;transform:scaleX(0.8900);transform-origin:right 0;">19,00</div>
<div class="t" id="t139" style="left:717.7px;top:629.73px;font-size:10px;font-weight:400;color:#777;transform:scaleX(0.7800);transform-origin:left 0;">%</div>
<div class="t" id="t140" style="right:300.2px;top:628.04px;font-size:12px;font-weight:400;color:#7d7d7d;transform:scaleX(0.8900);transform-origin:right 0;">190,00</div>
<div class="t" id="t141" style="left:777.1px;top:629.73px;font-size:10px;font-weight:400;color:#707070;transform:scaleX(0.9850);transform-origin:left 0;">€</div>
<div class="t" id="t142" style="right:100.1px;top:628.04px;font-size:12px;font-weight:400;color:#7d7d7d;transform:scaleX(0.8900);transform-origin:right 0;">1.000,00</div>
<div class="t" id="t143" style="left:966.3px;top:629.73px;font-size:10px;font-weight:400;color:#707070;transform:scaleX(0.9850);transform-origin:left 0;">€</div>
<div class="b" style="left:17px;top:644px;width:1009px;height:1px;background:repeating-linear-gradient(to right,#dedede 0 1px,transparent 1px 2px);"></div>
<div class="t" id="t144" style="left:28.2px;top:649.04px;font-size:12px;font-weight:400;color:#7d7d7d;transform:scaleX(0.9000);transform-origin:left 0;">5</div>
<div class="t" id="t145" style="left:88.0px;top:649.04px;font-size:12px;font-weight:400;color:#000;">LP5 - Ausführungsplanung</div>
<div class="t" id="t146" style="left:319.7px;top:649.04px;font-size:12px;font-weight:400;color:#000;transform:scaleX(0.9454);transform-origin:left 0;">Prozent</div>
<div class="t" id="t147" style="right:678.3px;top:649.04px;font-size:12px;font-weight:400;color:#000;transform:scaleX(0.8900);transform-origin:right 0;">25,00%</div>
<div class="t" id="t148" style="left:457.2px;top:650.73px;font-size:10px;font-weight:400;color:#707070;transform:scaleX(0.9850);transform-origin:left 0;">€</div>
<div class="t" id="t149" style="right:598.0px;top:649.04px;font-size:12px;font-weight:400;color:#000;transform:scaleX(0.8907);transform-origin:right 0;">100.000,00</div>
<div class="t" id="t150" style="right:517.9px;top:649.04px;font-size:12px;font-weight:400;color:#7d7d7d;transform:scaleX(0.8900);transform-origin:right 0;">25.000,00</div>
<div class="t" id="t151" style="left:543.1px;top:650.73px;font-size:10px;font-weight:400;color:#707070;transform:scaleX(0.9850);transform-origin:left 0;">€</div>
<div class="t" id="t152" style="right:437.7px;top:649.04px;font-size:12px;font-weight:400;color:#000;transform:scaleX(0.8900);transform-origin:right 0;">10,00</div>
<div class="t" id="t153" style="left:640.5px;top:650.73px;font-size:10px;font-weight:400;color:#777;transform:scaleX(0.7800);transform-origin:left 0;">%</div>
<svg style="left:683px;top:644.5px" width="6" height="5"><path d="M0 0 H5.5 V5 Z" fill="#d49c9c"/></svg>
<div class="t" id="t154" style="right:362.4px;top:649.04px;font-size:12px;font-weight:400;color:#000;transform:scaleX(0.8900);transform-origin:right 0;">19,00</div>
<div class="t" id="t155" style="left:717.7px;top:650.73px;font-size:10px;font-weight:400;color:#777;transform:scaleX(0.7800);transform-origin:left 0;">%</div>
<div class="t" id="t156" style="right:300.2px;top:649.04px;font-size:12px;font-weight:400;color:#7d7d7d;transform:scaleX(0.8900);transform-origin:right 0;">475,00</div>
<div class="t" id="t157" style="left:777.1px;top:650.73px;font-size:10px;font-weight:400;color:#707070;transform:scaleX(0.9850);transform-origin:left 0;">€</div>
<div class="t" id="t158" style="right:100.1px;top:649.04px;font-size:12px;font-weight:400;color:#7d7d7d;transform:scaleX(0.8900);transform-origin:right 0;">2.500,00</div>
<div class="t" id="t159" style="left:966.3px;top:650.73px;font-size:10px;font-weight:400;color:#707070;transform:scaleX(0.9850);transform-origin:left 0;">€</div>
<div class="b" style="left:17px;top:665px;width:1009px;height:1px;background:repeating-linear-gradient(to right,#dedede 0 1px,transparent 1px 2px);"></div>
<div class="t" id="t160" style="left:28.2px;top:670.04px;font-size:12px;font-weight:400;color:#7d7d7d;transform:scaleX(0.9000);transform-origin:left 0;">6</div>
<div class="t" id="t161" style="left:88.0px;top:670.04px;font-size:12px;font-weight:400;color:#000;transform:scaleX(0.9896);transform-origin:left 0;">LP4 - Genehmigungsplanung</div>
<div class="t" id="t162" style="left:319.7px;top:670.04px;font-size:12px;font-weight:400;color:#000;transform:scaleX(0.9454);transform-origin:left 0;">Prozent</div>
<div class="t" id="t163" style="right:678.3px;top:670.04px;font-size:12px;font-weight:400;color:#000;transform:scaleX(0.8900);transform-origin:right 0;">3,00%</div>
<div class="t" id="t164" style="left:457.2px;top:671.73px;font-size:10px;font-weight:400;color:#707070;transform:scaleX(0.9850);transform-origin:left 0;">€</div>
<div class="t" id="t165" style="right:598.0px;top:670.04px;font-size:12px;font-weight:400;color:#000;transform:scaleX(0.8907);transform-origin:right 0;">100.000,00</div>
<div class="t" id="t166" style="right:517.9px;top:670.04px;font-size:12px;font-weight:400;color:#7d7d7d;transform:scaleX(0.8900);transform-origin:right 0;">3.000,00</div>
<div class="t" id="t167" style="left:548.5px;top:671.73px;font-size:10px;font-weight:400;color:#707070;transform:scaleX(0.9850);transform-origin:left 0;">€</div>
<div class="t" id="t168" style="right:437.7px;top:670.04px;font-size:12px;font-weight:400;color:#000;transform:scaleX(0.8900);transform-origin:right 0;">10,00</div>
<div class="t" id="t169" style="left:640.5px;top:671.73px;font-size:10px;font-weight:400;color:#777;transform:scaleX(0.7800);transform-origin:left 0;">%</div>
<svg style="left:683px;top:665.5px" width="6" height="5"><path d="M0 0 H5.5 V5 Z" fill="#d49c9c"/></svg>
<div class="t" id="t170" style="right:362.4px;top:670.04px;font-size:12px;font-weight:400;color:#000;transform:scaleX(0.8900);transform-origin:right 0;">19,00</div>
<div class="t" id="t171" style="left:717.7px;top:671.73px;font-size:10px;font-weight:400;color:#777;transform:scaleX(0.7800);transform-origin:left 0;">%</div>
<div class="t" id="t172" style="right:300.2px;top:670.04px;font-size:12px;font-weight:400;color:#7d7d7d;transform:scaleX(0.8900);transform-origin:right 0;">57,00</div>
<div class="t" id="t173" style="left:782.5px;top:671.73px;font-size:10px;font-weight:400;color:#707070;transform:scaleX(0.9850);transform-origin:left 0;">€</div>
<div class="t" id="t174" style="right:100.1px;top:670.04px;font-size:12px;font-weight:400;color:#7d7d7d;transform:scaleX(0.8900);transform-origin:right 0;">300,00</div>
<div class="t" id="t175" style="left:977.2px;top:671.73px;font-size:10px;font-weight:400;color:#707070;transform:scaleX(0.9850);transform-origin:left 0;">€</div>
<div class="b" style="left:17px;top:686px;width:1009px;height:1px;background:repeating-linear-gradient(to right,#dedede 0 1px,transparent 1px 2px);"></div>
<div class="t" id="t176" style="left:28.2px;top:691.04px;font-size:12px;font-weight:400;color:#7d7d7d;transform:scaleX(0.9000);transform-origin:left 0;">7</div>
<div class="t" id="t177" style="left:88.0px;top:691.04px;font-size:12px;font-weight:400;color:#000;transform:scaleX(0.9790);transform-origin:left 0;">LP3 - Entwursplanung</div>
<div class="t" id="t178" style="left:319.7px;top:691.04px;font-size:12px;font-weight:400;color:#000;transform:scaleX(0.9454);transform-origin:left 0;">Prozent</div>
<div class="t" id="t179" style="right:678.3px;top:691.04px;font-size:12px;font-weight:400;color:#000;transform:scaleX(0.8900);transform-origin:right 0;">15,00%</div>
<div class="t" id="t180" style="left:457.2px;top:692.73px;font-size:10px;font-weight:400;color:#707070;transform:scaleX(0.9850);transform-origin:left 0;">€</div>
<div class="t" id="t181" style="right:598.0px;top:691.04px;font-size:12px;font-weight:400;color:#000;transform:scaleX(0.8907);transform-origin:right 0;">100.000,00</div>
<div class="t" id="t182" style="right:517.9px;top:691.04px;font-size:12px;font-weight:400;color:#7d7d7d;transform:scaleX(0.8900);transform-origin:right 0;">15.000,00</div>
<div class="t" id="t183" style="left:543.1px;top:692.73px;font-size:10px;font-weight:400;color:#707070;transform:scaleX(0.9850);transform-origin:left 0;">€</div>
<div class="t" id="t184" style="right:437.7px;top:691.04px;font-size:12px;font-weight:400;color:#000;transform:scaleX(0.8900);transform-origin:right 0;">10,00</div>
<div class="t" id="t185" style="left:640.5px;top:692.73px;font-size:10px;font-weight:400;color:#777;transform:scaleX(0.7800);transform-origin:left 0;">%</div>
<svg style="left:683px;top:686.5px" width="6" height="5"><path d="M0 0 H5.5 V5 Z" fill="#d49c9c"/></svg>
<div class="t" id="t186" style="right:362.4px;top:691.04px;font-size:12px;font-weight:400;color:#000;transform:scaleX(0.8900);transform-origin:right 0;">19,00</div>
<div class="t" id="t187" style="left:717.7px;top:692.73px;font-size:10px;font-weight:400;color:#777;transform:scaleX(0.7800);transform-origin:left 0;">%</div>
<div class="t" id="t188" style="right:300.2px;top:691.04px;font-size:12px;font-weight:400;color:#7d7d7d;transform:scaleX(0.8900);transform-origin:right 0;">285,00</div>
<div class="t" id="t189" style="left:777.1px;top:692.73px;font-size:10px;font-weight:400;color:#707070;transform:scaleX(0.9850);transform-origin:left 0;">€</div>
<div class="t" id="t190" style="right:100.1px;top:691.04px;font-size:12px;font-weight:400;color:#7d7d7d;transform:scaleX(0.8900);transform-origin:right 0;">1.500,00</div>
<div class="t" id="t191" style="left:966.3px;top:692.73px;font-size:10px;font-weight:400;color:#707070;transform:scaleX(0.9850);transform-origin:left 0;">€</div>
<div class="b" style="left:17px;top:707px;width:1009px;height:1px;background:repeating-linear-gradient(to right,#dedede 0 1px,transparent 1px 2px);"></div>
<div class="t" id="t192" style="left:28.2px;top:712.04px;font-size:12px;font-weight:400;color:#7d7d7d;transform:scaleX(0.9000);transform-origin:left 0;">8</div>
<div class="t" id="t193" style="left:88.0px;top:712.04px;font-size:12px;font-weight:400;color:#000;transform:scaleX(0.9779);transform-origin:left 0;">LP2 - Vorplanung</div>
<div class="t" id="t194" style="left:319.7px;top:712.04px;font-size:12px;font-weight:400;color:#000;transform:scaleX(0.9454);transform-origin:left 0;">Prozent</div>
<div class="t" id="t195" style="right:678.3px;top:712.04px;font-size:12px;font-weight:400;color:#000;transform:scaleX(0.8900);transform-origin:right 0;">7,00%</div>
<div class="t" id="t196" style="left:457.2px;top:713.73px;font-size:10px;font-weight:400;color:#707070;transform:scaleX(0.9850);transform-origin:left 0;">€</div>
<div class="t" id="t197" style="right:598.0px;top:712.04px;font-size:12px;font-weight:400;color:#000;transform:scaleX(0.8907);transform-origin:right 0;">100.000,00</div>
<div class="t" id="t198" style="right:517.9px;top:712.04px;font-size:12px;font-weight:400;color:#7d7d7d;transform:scaleX(0.8900);transform-origin:right 0;">7.000,00</div>
<div class="t" id="t199" style="left:548.5px;top:713.73px;font-size:10px;font-weight:400;color:#707070;transform:scaleX(0.9850);transform-origin:left 0;">€</div>
<div class="t" id="t200" style="right:437.7px;top:712.04px;font-size:12px;font-weight:400;color:#000;transform:scaleX(0.8900);transform-origin:right 0;">10,00</div>
<div class="t" id="t201" style="left:640.5px;top:713.73px;font-size:10px;font-weight:400;color:#777;transform:scaleX(0.7800);transform-origin:left 0;">%</div>
<svg style="left:683px;top:707.5px" width="6" height="5"><path d="M0 0 H5.5 V5 Z" fill="#d49c9c"/></svg>
<div class="t" id="t202" style="right:362.4px;top:712.04px;font-size:12px;font-weight:400;color:#000;transform:scaleX(0.8900);transform-origin:right 0;">19,00</div>
<div class="t" id="t203" style="left:717.7px;top:713.73px;font-size:10px;font-weight:400;color:#777;transform:scaleX(0.7800);transform-origin:left 0;">%</div>
<div class="t" id="t204" style="right:300.2px;top:712.04px;font-size:12px;font-weight:400;color:#7d7d7d;transform:scaleX(0.8900);transform-origin:right 0;">133,00</div>
<div class="t" id="t205" style="left:777.1px;top:713.73px;font-size:10px;font-weight:400;color:#707070;transform:scaleX(0.9850);transform-origin:left 0;">€</div>
<div class="t" id="t206" style="right:100.1px;top:712.04px;font-size:12px;font-weight:400;color:#7d7d7d;transform:scaleX(0.8900);transform-origin:right 0;">700,00</div>
<div class="t" id="t207" style="left:977.2px;top:713.73px;font-size:10px;font-weight:400;color:#707070;transform:scaleX(0.9850);transform-origin:left 0;">€</div>
<div class="b" style="left:17px;top:728px;width:1009px;height:1px;background:repeating-linear-gradient(to right,#dedede 0 1px,transparent 1px 2px);"></div>
<div class="b" style="left:689px;top:729px;width:75px;height:20px;background:#80b9e6;"></div>
<div class="t" id="t208" style="left:28.2px;top:733.04px;font-size:12px;font-weight:400;color:#7d7d7d;transform:scaleX(0.9000);transform-origin:left 0;">9</div>
<div class="t" id="t209" style="left:88.0px;top:733.04px;font-size:12px;font-weight:400;color:#000;">LP1 - Grundlagenermittlung</div>
<div class="t" id="t210" style="left:319.7px;top:733.04px;font-size:12px;font-weight:400;color:#000;transform:scaleX(0.9454);transform-origin:left 0;">Prozent</div>
<div class="t" id="t211" style="right:678.3px;top:733.04px;font-size:12px;font-weight:400;color:#000;transform:scaleX(0.8900);transform-origin:right 0;">2,00%</div>
<div class="t" id="t212" style="left:457.2px;top:734.73px;font-size:10px;font-weight:400;color:#707070;transform:scaleX(0.9850);transform-origin:left 0;">€</div>
<div class="t" id="t213" style="right:598.0px;top:733.04px;font-size:12px;font-weight:400;color:#000;transform:scaleX(0.8907);transform-origin:right 0;">100.000,00</div>
<div class="t" id="t214" style="right:517.9px;top:733.04px;font-size:12px;font-weight:400;color:#7d7d7d;transform:scaleX(0.8900);transform-origin:right 0;">2.000,00</div>
<div class="t" id="t215" style="left:548.5px;top:734.73px;font-size:10px;font-weight:400;color:#707070;transform:scaleX(0.9850);transform-origin:left 0;">€</div>
<div class="t" id="t216" style="right:437.7px;top:733.04px;font-size:12px;font-weight:400;color:#000;transform:scaleX(0.8900);transform-origin:right 0;">100,00</div>
<div class="t" id="t217" style="left:635.1px;top:734.73px;font-size:10px;font-weight:400;color:#777;transform:scaleX(0.7800);transform-origin:left 0;">%</div>
<svg style="left:683px;top:728.5px" width="6" height="5"><path d="M0 0 H5.5 V5 Z" fill="#d49c9c"/></svg>
<div class="t" id="t218" style="right:362.4px;top:733.04px;font-size:12px;font-weight:400;color:#e9f2fb;transform:scaleX(0.8900);transform-origin:right 0;">19,00</div>
<div class="t" id="t219" style="left:717.7px;top:734.73px;font-size:10px;font-weight:400;color:#4a6f92;transform:scaleX(0.7800);transform-origin:left 0;">%</div>
<div class="t" id="t220" style="right:300.2px;top:733.04px;font-size:12px;font-weight:400;color:#7d7d7d;transform:scaleX(0.8900);transform-origin:right 0;">380,00</div>
<div class="t" id="t221" style="left:777.1px;top:734.73px;font-size:10px;font-weight:400;color:#707070;transform:scaleX(0.9850);transform-origin:left 0;">€</div>
<div class="t" id="t222" style="right:100.1px;top:733.04px;font-size:12px;font-weight:400;color:#7d7d7d;transform:scaleX(0.8900);transform-origin:right 0;">2.000,00</div>
<div class="t" id="t223" style="left:966.3px;top:734.73px;font-size:10px;font-weight:400;color:#707070;transform:scaleX(0.9850);transform-origin:left 0;">€</div>
<div class="b" style="left:77px;top:560px;width:1px;height:190px;background:repeating-linear-gradient(to bottom,#dedede 0 1px,transparent 1px 2px);"></div>
<div class="b" style="left:308px;top:560px;width:1px;height:190px;background:repeating-linear-gradient(to bottom,#dedede 0 1px,transparent 1px 2px);"></div>
<div class="b" style="left:388px;top:560px;width:1px;height:190px;background:repeating-linear-gradient(to bottom,#dedede 0 1px,transparent 1px 2px);"></div>
<div class="b" style="left:448px;top:560px;width:1px;height:190px;background:repeating-linear-gradient(to bottom,#dedede 0 1px,transparent 1px 2px);"></div>
<div class="b" style="left:528px;top:560px;width:1px;height:190px;background:repeating-linear-gradient(to bottom,#dedede 0 1px,transparent 1px 2px);"></div>
<div class="b" style="left:608px;top:560px;width:1px;height:190px;background:repeating-linear-gradient(to bottom,#dedede 0 1px,transparent 1px 2px);"></div>
<div class="b" style="left:688px;top:560px;width:1px;height:190px;background:repeating-linear-gradient(to bottom,#dedede 0 1px,transparent 1px 2px);"></div>
<div class="b" style="left:764px;top:560px;width:1px;height:190px;background:repeating-linear-gradient(to bottom,#dedede 0 1px,transparent 1px 2px);"></div>
<div class="b" style="left:826px;top:560px;width:1px;height:190px;background:repeating-linear-gradient(to bottom,#dedede 0 1px,transparent 1px 2px);"></div>
<div class="b" style="left:1026px;top:560px;width:1px;height:190px;background:repeating-linear-gradient(to bottom,#dedede 0 1px,transparent 1px 2px);"></div>
<div class="b" style="left:24px;top:750px;width:424px;height:1px;background:#b4b4b4;"></div>
<div class="b" style="left:24px;top:752px;width:424px;height:1px;background:#b4b4b4;"></div>
<div class="b" style="left:449px;top:750px;width:377px;height:1px;background:#b4b4b4;"></div>
<div class="b" style="left:449px;top:752px;width:377px;height:1px;background:#b4b4b4;"></div>
<div class="b" style="left:827px;top:750px;width:200px;height:1px;background:#b4b4b4;"></div>
<div class="b" style="left:827px;top:752px;width:200px;height:1px;background:#b4b4b4;"></div>
<div class="b" style="left:17px;top:770px;width:1010px;height:1px;background:repeating-linear-gradient(to right,#dedede 0 1px,transparent 1px 2px);"></div>
<div class="b" style="left:17px;top:791px;width:1010px;height:1px;background:repeating-linear-gradient(to right,#dedede 0 1px,transparent 1px 2px);"></div>
<div class="b" style="left:17px;top:812px;width:1010px;height:1px;background:repeating-linear-gradient(to right,#dedede 0 1px,transparent 1px 2px);"></div>
<div class="b" style="left:448px;top:753px;width:1px;height:59px;background:repeating-linear-gradient(to bottom,#dedede 0 1px,transparent 1px 2px);"></div>
<div class="b" style="left:826px;top:753px;width:1px;height:59px;background:repeating-linear-gradient(to bottom,#dedede 0 1px,transparent 1px 2px);"></div>
<div class="b" style="left:1026px;top:753px;width:1px;height:59px;background:repeating-linear-gradient(to bottom,#dedede 0 1px,transparent 1px 2px);"></div>
<div class="t" id="t224" style="right:300.8px;top:753.94px;font-size:12px;font-weight:400;color:#000;transform:scaleX(0.9712);transform-origin:right 0;">Summe:</div>
<div class="t" id="t225" style="right:300.8px;top:774.84px;font-size:12px;font-weight:400;color:#000;transform:scaleX(0.9456);transform-origin:right 0;">MwSt. (19%):</div>
<div class="t" id="t226" style="right:300.8px;top:795.64px;font-size:12px;font-weight:700;color:#000;transform:scaleX(0.9369);transform-origin:right 0;">Gesamt:</div>
<div class="t" id="t227" style="left:960.7px;top:755.63px;font-size:10px;font-weight:400;color:#707070;transform:scaleX(0.9850);transform-origin:left 0;">€</div>
<div class="t" id="t228" style="right:100.3px;top:753.94px;font-size:12px;font-weight:400;color:#000;transform:scaleX(0.9028);transform-origin:right 0;"><u>15.800,00</u></div>
<div class="t" id="t229" style="left:959.0px;top:776.53px;font-size:10px;font-weight:400;color:#707070;transform:scaleX(0.9850);transform-origin:left 0;">€</div>
<div class="t" id="t230" style="right:100.3px;top:774.84px;font-size:12px;font-weight:400;color:#000;transform:scaleX(0.9252);transform-origin:right 0;">+3.002,00</div>
<div class="t" id="t231" style="left:954.3px;top:797.33px;font-size:10px;font-weight:400;color:#707070;transform:scaleX(0.9850);transform-origin:left 0;">€</div>
<div class="t" id="t232" style="right:100.3px;top:795.64px;font-size:12px;font-weight:700;color:#000;transform:scaleX(1.0227);transform-origin:right 0;"><u>18.802,00</u></div>
<div class="b" style="left:620px;top:534px;width:90px;height:223px;border:3px solid #fb3c3f;"></div>
<svg style="left:400px;top:745px" width="200" height="24" viewBox="0 0 200 24">
<path d="M8 11.5 H186" stroke="#e30000" stroke-width="4.6" stroke-linecap="round"/>
<path d="M173 4 L189 11.5 L173 19" fill="none" stroke="#e30000" stroke-width="4" stroke-linecap="round" stroke-linejoin="round"/>
</svg>
<svg style="left:16px;top:876.5px" width="16" height="16" viewBox="0 0 16 16">
<circle cx="8" cy="8" r="7.8" fill="#1497e0"/>
<path d="M2.5 13.5 A7.8 7.8 0 0 1 13.5 2.5 Z" fill="#2fb0f0"/>
<rect x="7" y="1.5" width="2" height="3" fill="#fff"/>
<rect x="7" y="6" width="2" height="7.5" fill="#fff"/>
</svg>
<div class="t" id="t233" style="left:38.2px;top:877.84px;font-size:12px;font-weight:400;color:#000;transform:scaleX(0.9840);transform-origin:left 0;"><b>Einf</b> = Neuer Posten | <b>Strg+Einf</b> = Posten aus Leistungskatalog | <b>Strg+Hoch</b> = Posten nach Oben | <b>Strg+Runter</b> = Posten nach Unten | <b>Strg+K</b> = Kommentar bearbeiten</div>
<svg style="left:1091px;top:877px" width="13" height="12"><path d="M2 2 L11 10 M11 2 L2 10" stroke="#3a3a3a" stroke-width="3.4" stroke-linecap="square"/></svg>
<div class="b" style="left:12px;top:906px;width:25px;height:25px;border:1px solid #d9d9d9;border-radius:4px;background:#fdfdfd;"></div>
<svg style="left:17px;top:911px" width="15" height="15" viewBox="0 0 15 15">
<rect x="0.5" y="0.5" width="14" height="14" fill="#41535e"/>
<rect x="2.5" y="0.5" width="10" height="6" fill="#bfe0f5"/>
<rect x="2.5" y="6.5" width="10" height="1.6" fill="#ff8c00"/>
<rect x="3.5" y="9.5" width="8" height="5" fill="#fff"/>
<rect x="5" y="10.5" width="1.5" height="3.5" fill="#41535e"/>
</svg>
<div class="b" style="left:40px;top:906px;width:24px;height:25px;border:1px solid #d9d9d9;border-radius:4px;background:#fdfdfd;background:#f6f6f6;"></div>
<svg style="left:44px;top:911px" width="16" height="16" viewBox="0 0 16 16">
<path d="M1 1 H7 L9 3 V15 H1 Z" fill="#e8c9a0"/>
<path d="M9 15 L12 8.5 L15.5 15 Z" fill="#f3d37a"/>
</svg>
<div class="b" style="left:67px;top:906px;width:24px;height:25px;border:1px solid #d9d9d9;border-radius:4px;background:#fdfdfd;"></div>
<svg style="left:72px;top:910px" width="14" height="17" viewBox="0 0 14 17">
<path d="M3.5 8 V4.5 A3.5 3.5 0 0 1 10.5 4.5 V5.5" fill="none" stroke="#3f4f58" stroke-width="1.6"/>
<rect x="1" y="8" width="12" height="8.5" fill="#f7c500" stroke="#c79a00" stroke-width="0.6"/>
<rect x="6.2" y="10.5" width="1.6" height="3.5" fill="#3f4f58"/>
</svg>
<div class="b" style="left:98px;top:912px;width:13px;height:13px;border:1px solid #5a5a5a;border-radius:3px;background:#f3f3f3;"></div>
<div class="t" id="t234" style="left:114.4px;top:912.74px;font-size:12px;font-weight:400;color:#000;transform:scaleX(0.9792);transform-origin:left 0;">Rechnung drucken beim Schließen</div>
<div class="b" style="left:780px;top:906px;width:151px;height:25px;border:1px solid #d9d9d9;border-radius:4px;background:#fdfdfd;"></div>
<div class="t" id="t235" style="left:796.7px;top:912.34px;font-size:12px;font-weight:400;color:#000;transform:scaleX(0.9632);transform-origin:left 0;"><u>S</u>peichern &amp; Schließen</div>
<div class="b" style="left:935px;top:906px;width:88px;height:25px;border:1px solid #d9d9d9;border-radius:4px;background:#fdfdfd;"></div>
<div class="t" id="t236" style="left:956.0px;top:912.34px;font-size:12px;font-weight:400;color:#000;transform:scaleX(1.0178);transform-origin:left 0;">Abbruch</div>
<div class="b" style="left:1027px;top:906px;width:88px;height:25px;border:1px solid #d9d9d9;border-radius:4px;background:#fdfdfd;"></div>
<div class="t" id="t237" style="left:1058.0px;top:912.34px;font-size:12px;font-weight:400;color:#000;transform:scaleX(1.0410);transform-origin:left 0;">Hilfe</div>
</body></html>
